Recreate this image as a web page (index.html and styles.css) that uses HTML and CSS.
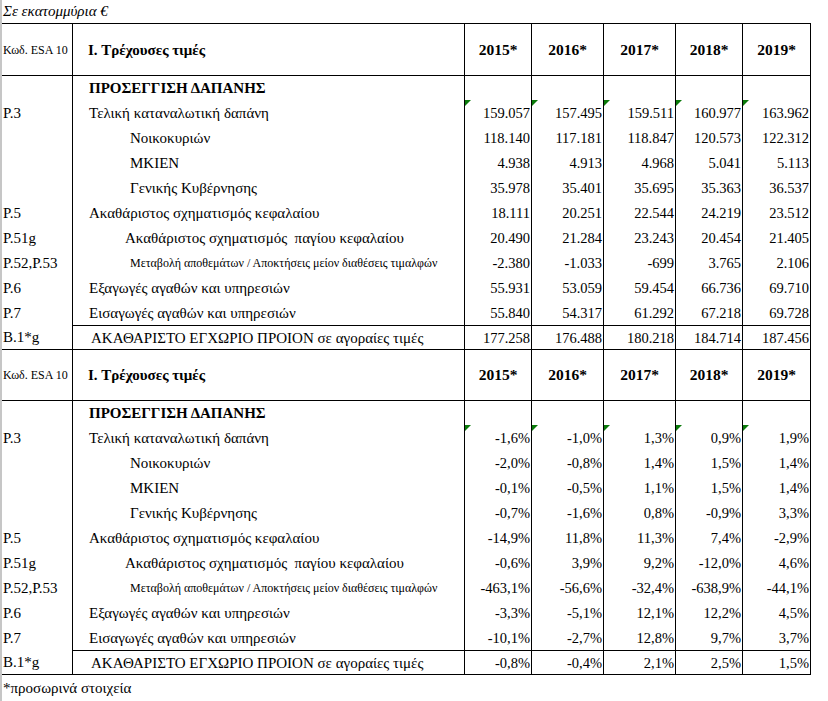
FILE: index.html
```html
<!DOCTYPE html>
<html lang="el">
<head>
<meta charset="utf-8">
<title>Σε εκατομμύρια €</title>
<link rel="stylesheet" href="styles.css">
</head>
<body>
<div class="title">Σε εκατομμύρια €</div>
<table class="sheet">
  <colgroup>
    <col class="c-code"><col class="c-label"><col class="c-y1"><col class="c-y2"><col class="c-y3"><col class="c-y4"><col class="c-y5">
  </colgroup>
  <tbody>
    <tr class="hdr">
      <td class="code small">Κωδ. ESA 10</td>
      <td class="label bold head">I. Τρέχουσες τιμές</td>
      <td class="year">2015*</td><td class="year">2016*</td><td class="year">2017*</td><td class="year">2018*</td><td class="year">2019*</td>
    </tr>
    <tr class="first">
      <td class="code"></td><td class="label bold">ΠΡΟΣΕΓΓΙΣΗ ΔΑΠΑΝΗΣ</td>
      <td></td><td></td><td></td><td></td><td></td>
    </tr>
    <tr>
      <td class="code">P.3</td><td class="label">Τελική καταναλωτική δαπάνη</td>
      <td class="num flag">159.057</td><td class="num flag">157.495</td><td class="num flag">159.511</td><td class="num flag">160.977</td><td class="num flag">163.962</td>
    </tr>
    <tr>
      <td class="code"></td><td class="label ind1">Νοικοκυριών</td>
      <td class="num">118.140</td><td class="num">117.181</td><td class="num">118.847</td><td class="num">120.573</td><td class="num">122.312</td>
    </tr>
    <tr>
      <td class="code"></td><td class="label ind1">ΜΚΙΕΝ</td>
      <td class="num">4.938</td><td class="num">4.913</td><td class="num">4.968</td><td class="num">5.041</td><td class="num">5.113</td>
    </tr>
    <tr>
      <td class="code"></td><td class="label ind1">Γενικής Κυβέρνησης</td>
      <td class="num">35.978</td><td class="num">35.401</td><td class="num">35.695</td><td class="num">35.363</td><td class="num">36.537</td>
    </tr>
    <tr>
      <td class="code">P.5</td><td class="label">Ακαθάριστος σχηματισμός κεφαλαίου</td>
      <td class="num">18.111</td><td class="num">20.251</td><td class="num">22.544</td><td class="num">24.219</td><td class="num">23.512</td>
    </tr>
    <tr>
      <td class="code">P.51g</td><td class="label ind2">Ακαθάριστος σχηματισμός&nbsp; παγίου κεφαλαίου</td>
      <td class="num">20.490</td><td class="num">21.284</td><td class="num">23.243</td><td class="num">20.454</td><td class="num">21.405</td>
    </tr>
    <tr>
      <td class="code">P.52,P.53</td><td class="label ind3 small">Μεταβολή αποθεμάτων / Αποκτήσεις μείον διαθέσεις τιμαλφών</td>
      <td class="num">-2.380</td><td class="num">-1.033</td><td class="num">-699</td><td class="num">3.765</td><td class="num">2.106</td>
    </tr>
    <tr>
      <td class="code">P.6</td><td class="label">Εξαγωγές αγαθών και υπηρεσιών</td>
      <td class="num">55.931</td><td class="num">53.059</td><td class="num">59.454</td><td class="num">66.736</td><td class="num">69.710</td>
    </tr>
    <tr>
      <td class="code">P.7</td><td class="label">Εισαγωγές αγαθών και υπηρεσιών</td>
      <td class="num">55.840</td><td class="num">54.317</td><td class="num">61.292</td><td class="num">67.218</td><td class="num">69.728</td>
    </tr>
    <tr class="total">
      <td class="code">B.1*g</td><td class="label gdp">ΑΚΑΘΑΡΙΣΤΟ ΕΓΧΩΡΙΟ ΠΡΟΙΟΝ σε αγοραίες τιμές</td>
      <td class="num">177.258</td><td class="num">176.488</td><td class="num">180.218</td><td class="num">184.714</td><td class="num">187.456</td>
    </tr>

    <tr class="hdr hdr2">
      <td class="code small">Κωδ. ESA 10</td>
      <td class="label bold head">I. Τρέχουσες τιμές</td>
      <td class="year">2015*</td><td class="year">2016*</td><td class="year">2017*</td><td class="year">2018*</td><td class="year">2019*</td>
    </tr>
    <tr class="first">
      <td class="code"></td><td class="label bold">ΠΡΟΣΕΓΓΙΣΗ ΔΑΠΑΝΗΣ</td>
      <td></td><td></td><td></td><td></td><td></td>
    </tr>
    <tr>
      <td class="code">P.3</td><td class="label">Τελική καταναλωτική δαπάνη</td>
      <td class="num flag">-1,6%</td><td class="num flag">-1,0%</td><td class="num flag">1,3%</td><td class="num flag">0,9%</td><td class="num flag">1,9%</td>
    </tr>
    <tr>
      <td class="code"></td><td class="label ind1">Νοικοκυριών</td>
      <td class="num">-2,0%</td><td class="num">-0,8%</td><td class="num">1,4%</td><td class="num">1,5%</td><td class="num">1,4%</td>
    </tr>
    <tr>
      <td class="code"></td><td class="label ind1">ΜΚΙΕΝ</td>
      <td class="num">-0,1%</td><td class="num">-0,5%</td><td class="num">1,1%</td><td class="num">1,5%</td><td class="num">1,4%</td>
    </tr>
    <tr>
      <td class="code"></td><td class="label ind1">Γενικής Κυβέρνησης</td>
      <td class="num">-0,7%</td><td class="num">-1,6%</td><td class="num">0,8%</td><td class="num">-0,9%</td><td class="num">3,3%</td>
    </tr>
    <tr>
      <td class="code">P.5</td><td class="label">Ακαθάριστος σχηματισμός κεφαλαίου</td>
      <td class="num">-14,9%</td><td class="num">11,8%</td><td class="num">11,3%</td><td class="num">7,4%</td><td class="num">-2,9%</td>
    </tr>
    <tr>
      <td class="code">P.51g</td><td class="label ind2">Ακαθάριστος σχηματισμός&nbsp; παγίου κεφαλαίου</td>
      <td class="num">-0,6%</td><td class="num">3,9%</td><td class="num">9,2%</td><td class="num">-12,0%</td><td class="num">4,6%</td>
    </tr>
    <tr>
      <td class="code">P.52,P.53</td><td class="label ind3 small">Μεταβολή αποθεμάτων / Αποκτήσεις μείον διαθέσεις τιμαλφών</td>
      <td class="num">-463,1%</td><td class="num">-56,6%</td><td class="num">-32,4%</td><td class="num">-638,9%</td><td class="num">-44,1%</td>
    </tr>
    <tr>
      <td class="code">P.6</td><td class="label">Εξαγωγές αγαθών και υπηρεσιών</td>
      <td class="num">-3,3%</td><td class="num">-5,1%</td><td class="num">12,1%</td><td class="num">12,2%</td><td class="num">4,5%</td>
    </tr>
    <tr>
      <td class="code">P.7</td><td class="label">Εισαγωγές αγαθών και υπηρεσιών</td>
      <td class="num">-10,1%</td><td class="num">-2,7%</td><td class="num">12,8%</td><td class="num">9,7%</td><td class="num">3,7%</td>
    </tr>
    <tr class="total">
      <td class="code">B.1*g</td><td class="label gdp">ΑΚΑΘΑΡΙΣΤΟ ΕΓΧΩΡΙΟ ΠΡΟΙΟΝ σε αγοραίες τιμές</td>
      <td class="num">-0,8%</td><td class="num">-0,4%</td><td class="num">2,1%</td><td class="num">2,5%</td><td class="num">1,5%</td>
    </tr>
  </tbody>
</table>
<div class="note">*προσωρινά στοιχεία</div>
</body>
</html>
```
FILE: styles.css
```css
html, body {
  margin: 0;
  padding: 0;
  background: #fff;
}
body {
  border-left: 2px solid #c6c6c6;
  min-height: 701px;
  box-sizing: border-box;
  font-family: "Liberation Serif", "Times New Roman", serif;
  color: #000;
}
.title {
  height: 23px;
  line-height: 23px;
  font-size: 15px;
  font-style: italic;
  padding-left: 1px;
}
.sheet {
  border-collapse: separate;
  border-spacing: 0;
  table-layout: fixed;
  width: 809px;
  border-top: 1px solid #000;
}
.c-code { width: 71px; }
.c-label { width: 392px; }
.c-y1 { width: 67px; }
.c-y2 { width: 72px; }
.c-y3 { width: 72px; }
.c-y4 { width: 67px; }
.c-y5 { width: 68px; }
.sheet td {
  box-sizing: border-box;
  padding: 0;
  height: 25px;
  border-right: 1px solid #000;
  vertical-align: middle;
  white-space: nowrap;
  overflow: hidden;
  font-size: 15px;
  line-height: 16px;
}
.sheet .hdr td {
  height: 52px;
  border-bottom: 1px solid #000;
}
.sheet .hdr2 td {
  height: 51px;
}
.sheet .first td {
  height: 24px;
}
.sheet .total td {
  height: 25px;
  border-bottom: 1px solid #000;
}
.sheet .total td + td {
  border-top: 1px solid #000;
}
.sheet td.code {
  padding-left: 1px;
}
.sheet td.code.small {
  font-size: 12px;
}
.sheet td.label {
  padding-left: 16px;
}
.sheet td.label.head {
  padding-left: 15px;
}
.sheet td.label.gdp {
  padding-left: 18px;
}
.sheet td.bold {
  font-weight: bold;
}
.sheet td.ind1 { padding-left: 57px; }
.sheet td.ind2 { padding-left: 52px; }
.sheet td.ind3 { padding-left: 57px; }
.sheet td.label.small {
  font-size: 12px;
}
.sheet td.year {
  text-align: center;
  font-weight: bold;
  font-size: 15.5px;
}
.sheet td.num {
  text-align: right;
  padding-right: 1px;
  font-size: 14.5px;
}
.sheet td.flag {
  position: relative;
}
.sheet td.flag::before {
  content: "";
  position: absolute;
  left: 0;
  top: 0;
  width: 0;
  height: 0;
  border-top: 6px solid #0a7a0a;
  border-right: 6px solid transparent;
}
.note {
  font-size: 15px;
  padding-left: 1px;
  margin-top: 5px;
  line-height: 16px;
}
```
